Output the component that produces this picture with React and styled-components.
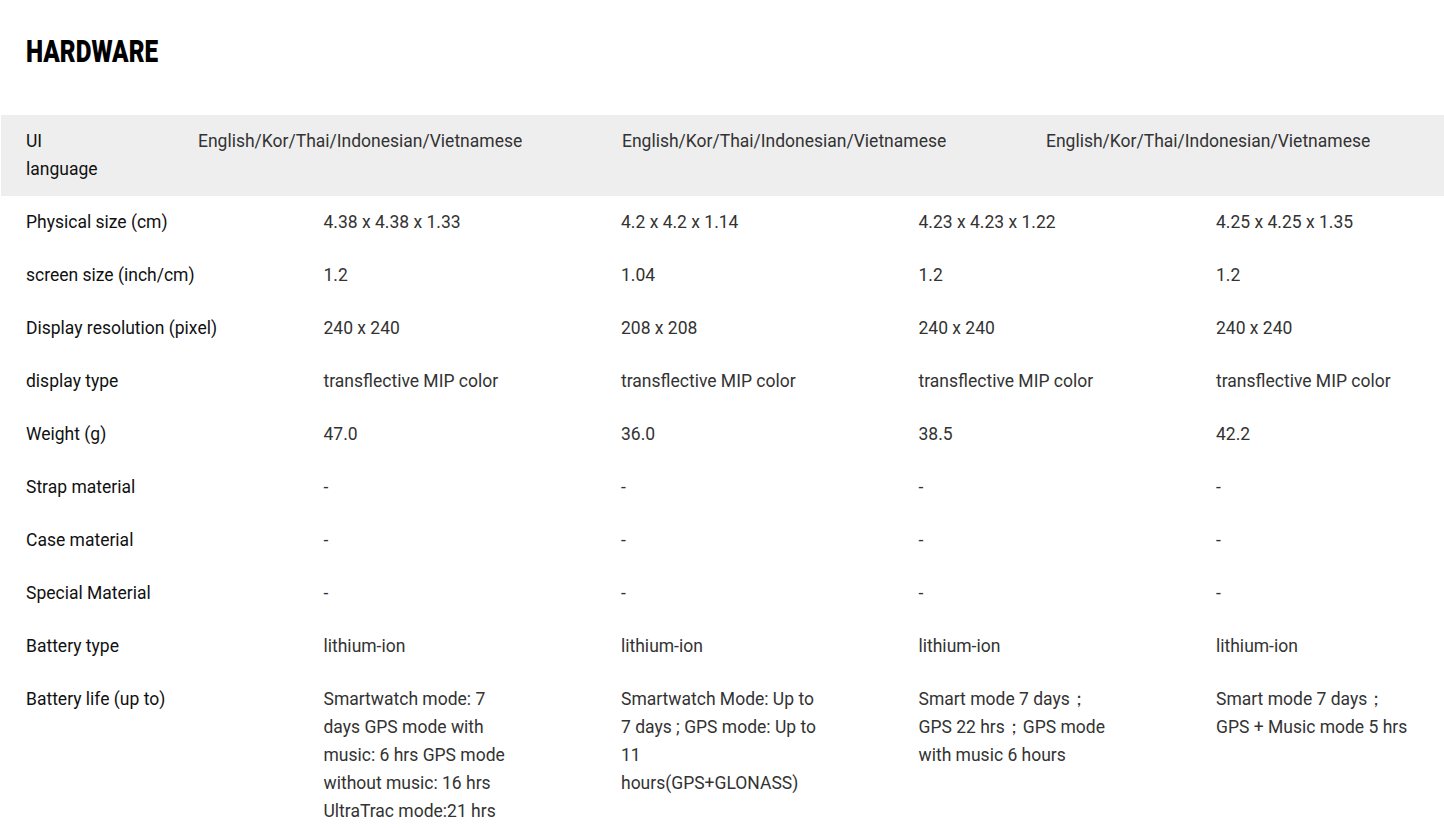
import React from "react";
import styled, { createGlobalStyle } from "styled-components";

const GlobalStyle = createGlobalStyle`
  body {
    margin: 0;
    background: #fff;
    font-family: Roboto, "Liberation Sans", sans-serif;
    overflow-x: hidden;
  }
`;

const Page = styled.div`
  padding: 35px 0 0 1px;
`;

const Title = styled.h2`
  margin: 0 0 48px 25px;
  font-family: Roboto, "Liberation Sans", sans-serif;
  font-size: 32px;
  line-height: 32px;
  font-weight: 900;
  color: #000;
  display: inline-block;
  transform: scaleX(0.76);
  transform-origin: left center;
`;

const LangRow = styled.div`
  display: grid;
  grid-template-columns: 172px repeat(3, 424px);
  background: #eeeeee;
`;

const Grid = styled.div`
  display: grid;
  grid-template-columns: repeat(5, 297.5px);
  width: 1487.5px;
`;

const Cell = styled.div`
  padding: 12px 25px 13px;
  font-size: 17.5px;
  line-height: 28px;
  color: ${p => (p.$label ? "#111" : "#333")};
  white-space: ${p => (p.$nowrap ? "nowrap" : "normal")};
`;

const Narrow = styled.div`
  width: 80px;
`;

const Line = styled.div`
  white-space: nowrap;
`;

const lang = "English/Kor/Thai/Indonesian/Vietnamese";

const rows = [
  ["Physical size (cm)", "4.38 x 4.38 x 1.33", "4.2 x 4.2 x 1.14", "4.23 x 4.23 x 1.22", "4.25 x 4.25 x 1.35"],
  ["screen size (inch/cm)", "1.2", "1.04", "1.2", "1.2"],
  ["Display resolution (pixel)", "240 x 240", "208 x 208", "240 x 240", "240 x 240"],
  ["display type", "transflective MIP color", "transflective MIP color", "transflective MIP color", "transflective MIP color"],
  ["Weight (g)", "47.0", "36.0", "38.5", "42.2"],
  ["Strap material", "-", "-", "-", "-"],
  ["Case material", "-", "-", "-", "-"],
  ["Special Material", "-", "-", "-", "-"],
  ["Battery type", "lithium-ion", "lithium-ion", "lithium-ion", "lithium-ion"],
];

const battery = [
  ["Smartwatch mode: 7", "days GPS mode with", "music: 6 hrs GPS mode", "without music: 16 hrs", "UltraTrac mode:21 hrs"],
  ["Smartwatch Mode: Up to", "7 days ; GPS mode: Up to", "11", "hours(GPS+GLONASS)"],
  ["Smart mode 7 days\uFF1B", "GPS 22 hrs\uFF1BGPS mode", "with music 6 hours"],
  ["Smart mode 7 days\uFF1B", "GPS + Music mode 5 hrs"],
];

export default function App() {
  return (
    <Page>
      <GlobalStyle />
      <Title>HARDWARE</Title>
      <LangRow>
        <Cell $label>
          <Narrow>UI language</Narrow>
        </Cell>
        <Cell>{lang}</Cell>
        <Cell>{lang}</Cell>
        <Cell>{lang}</Cell>
      </LangRow>
      <Grid>
        {rows.map(r => (
          <React.Fragment key={r[0]}>
            <Cell $label $nowrap>{r[0]}</Cell>
            {r.slice(1).map((v, i) => (
              <Cell key={i}>{v}</Cell>
            ))}
          </React.Fragment>
        ))}
        <Cell $label $nowrap>Battery life (up to)</Cell>
        {battery.map((lines, i) => (
          <Cell key={i}>
            {lines.map((l, j) => (
              <Line key={j}>{l}</Line>
            ))}
          </Cell>
        ))}
      </Grid>
    </Page>
  );
}
